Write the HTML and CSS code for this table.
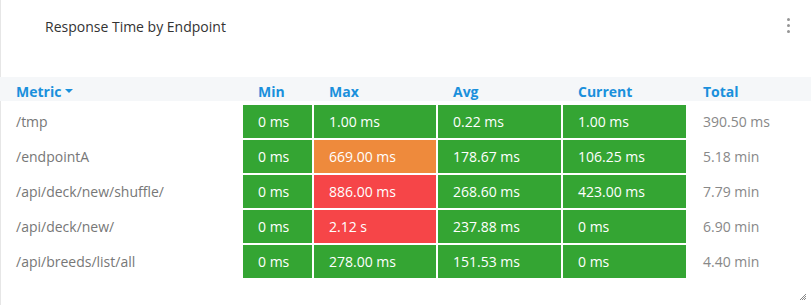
FILE: index.html
```html
<!DOCTYPE html>
<html>
<head>
<meta charset="utf-8">
<link rel="stylesheet" href="styles.css">
</head>
<body>
<div class="panel">
  <div class="panel-head">
    <span class="title">Response Time by Endpoint</span>
    <span class="kebab"><i></i><i></i><i></i></span>
  </div>
  <div class="table">
    <div class="row head">
      <div class="th first">Metric <span class="caret"></span></div>
      <div class="th">Min</div>
      <div class="th">Max</div>
      <div class="th">Avg</div>
      <div class="th">Current</div>
      <div class="th">Total</div>
    </div>
    <div class="body">
      <div class="row">
        <div class="name">/tmp</div>
        <div class="c g">0 ms</div>
        <div class="c g">1.00 ms</div>
        <div class="c g">0.22 ms</div>
        <div class="c g">1.00 ms</div>
        <div class="tot">390.50 ms</div>
      </div>
      <div class="row">
        <div class="name">/endpointA</div>
        <div class="c g">0 ms</div>
        <div class="c o">669.00 ms</div>
        <div class="c g">178.67 ms</div>
        <div class="c g">106.25 ms</div>
        <div class="tot">5.18 min</div>
      </div>
      <div class="row">
        <div class="name">/api/deck/new/shuffle/</div>
        <div class="c g">0 ms</div>
        <div class="c r">886.00 ms</div>
        <div class="c g">268.60 ms</div>
        <div class="c g">423.00 ms</div>
        <div class="tot">7.79 min</div>
      </div>
      <div class="row">
        <div class="name">/api/deck/new/</div>
        <div class="c g">0 ms</div>
        <div class="c r">2.12 s</div>
        <div class="c g">237.88 ms</div>
        <div class="c g">0 ms</div>
        <div class="tot">6.90 min</div>
      </div>
      <div class="row">
        <div class="name">/api/breeds/list/all</div>
        <div class="c g">0 ms</div>
        <div class="c g">278.00 ms</div>
        <div class="c g">151.53 ms</div>
        <div class="c g">0 ms</div>
        <div class="tot">4.40 min</div>
      </div>
    </div>
  </div>
  <svg class="resize" width="8" height="8" viewBox="0 0 8 8">
    <path d="M7 1 L1 7 M7 3 L3 7 M7 5 L5 7" stroke="#8a8a8a" stroke-width="1" fill="none"/>
  </svg>
</div>
</body>
</html>
```
FILE: styles.css
```css
html, body {
  margin: 0;
  padding: 0;
  background: #fff;
}
body {
  font-family: "Open Sans", "Liberation Sans", sans-serif;
  width: 811px;
  height: 305px;
  overflow: hidden;
}
.panel {
  position: relative;
  height: 305px;
  border-left: 1px solid #e6e6e6;
  box-sizing: border-box;
}
.panel-head {
  height: 52px;
  display: flex;
  align-items: center;
  justify-content: space-between;
  padding: 0 21px 0 44px;
}
.title {
  font-size: 14px;
  color: #333;
}
.kebab {
  display: flex;
  flex-direction: column;
  gap: 3px;
  margin-top: -1px;
}
.kebab i {
  display: block;
  width: 3px;
  height: 3px;
  border-radius: 50%;
  background: #959595;
}
.table {
  margin-top: 25px;
  margin-left: -1px;
}
.row {
  display: grid;
  grid-template-columns: 241px 69px 122px 123px 123px 1fr;
  column-gap: 2px;
  height: 33px;
  align-items: center;
}
.row.head {
  height: 24px;
  background: #f5f7f9;
}
.th {
  font-size: 14px;
  font-weight: 700;
  color: #1a90dc;
  padding-left: 15px;
  line-height: 24px;
  padding-top: 3px;
}
.th.first {
  padding-left: 16px;
}
.caret {
  display: inline-block;
  width: 0;
  height: 0;
  border-left: 4px solid transparent;
  border-right: 4px solid transparent;
  border-top: 4px solid #1a90dc;
  vertical-align: middle;
  margin-left: 0;
  position: relative;
  top: -2px;
}
.body {
  margin-top: 4px;
  display: flex;
  flex-direction: column;
  gap: 2px;
}
.name {
  padding-left: 16px;
  font-size: 14px;
  color: #777;
}
.c {
  height: 33px;
  line-height: 33px;
  padding-left: 15px;
  font-size: 14px;
  color: #fff;
}
.g { background: #34a533; }
.o { background: #ee8a3c; }
.r { background: #f64548; }
.tot {
  padding-left: 15px;
  font-size: 14px;
  color: #888;
}
.resize {
  position: absolute;
  right: 4px;
  bottom: 4px;
}
```
